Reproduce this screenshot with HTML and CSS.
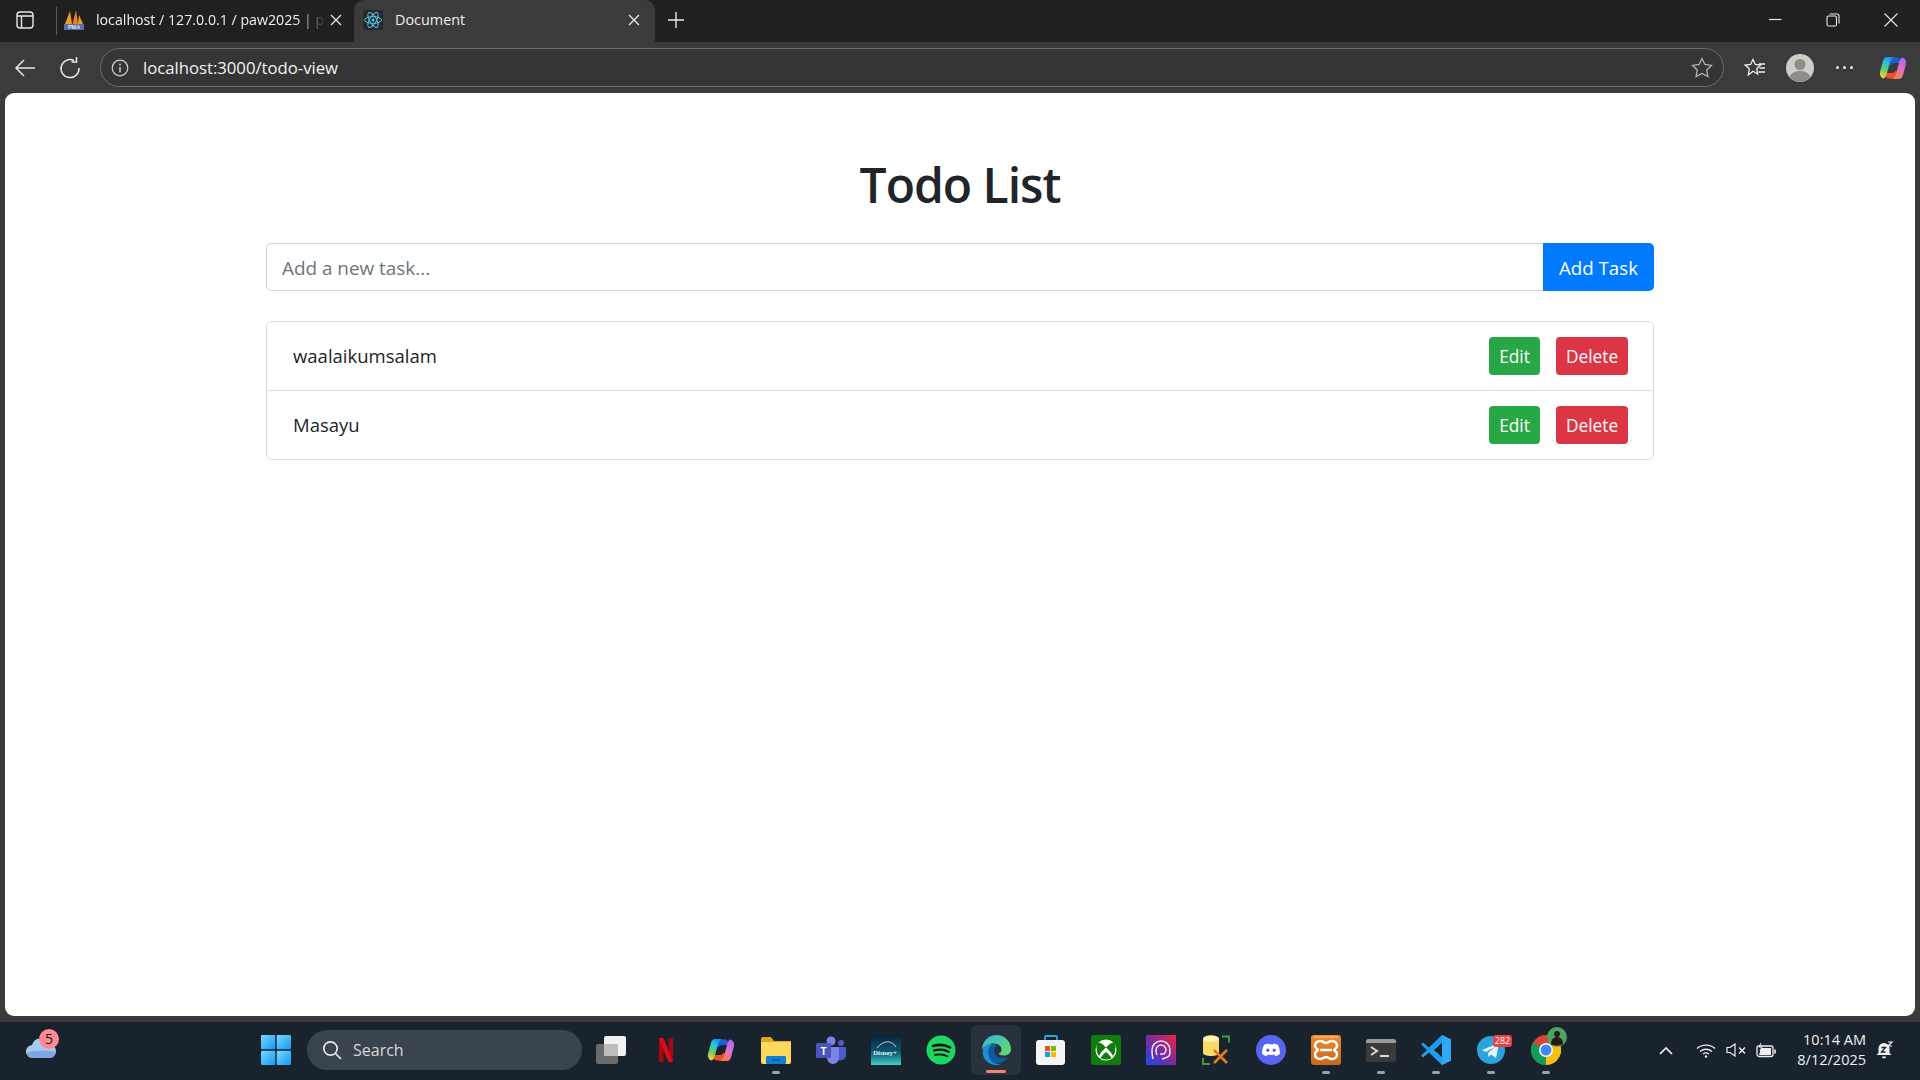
FILE: index.html
```html
<!DOCTYPE html>
<html lang="en">
<head>
    <meta charset="UTF-8">
    <title>Document</title>
    <link rel="stylesheet" href="styles.css">
</head>
<body>
    <svg class="defs" width="0" height="0">
        <defs>
            <linearGradient id="cp-a" x1="0.6" y1="0" x2="0.3" y2="1">
                <stop offset="0" stop-color="#1c8ff0"/>
                <stop offset="0.3" stop-color="#27c3e0"/>
                <stop offset="0.65" stop-color="#6fcf5a"/>
                <stop offset="1" stop-color="#f5d33c"/>
            </linearGradient>
            <linearGradient id="cp-b" x1="0.7" y1="0" x2="0.3" y2="1">
                <stop offset="0" stop-color="#a66cf0"/>
                <stop offset="0.5" stop-color="#e66fc8"/>
                <stop offset="1" stop-color="#f6823c"/>
            </linearGradient>
            <linearGradient id="edge-a" x1="0" y1="0" x2="1" y2="1">
                <stop offset="0" stop-color="#2fb5d8"/>
                <stop offset="1" stop-color="#6fdc62"/>
            </linearGradient>
            <linearGradient id="win-a" x1="0" y1="0" x2="1" y2="1">
                <stop offset="0" stop-color="#7bd7ff"/>
                <stop offset="1" stop-color="#0f9bf5"/>
            </linearGradient>
            <linearGradient id="proton-a" x1="0" y1="1" x2="1" y2="0">
                <stop offset="0" stop-color="#1c46f0"/>
                <stop offset="0.5" stop-color="#7a2d9c"/>
                <stop offset="1" stop-color="#f5233a"/>
            </linearGradient>
            <linearGradient id="disney-a" x1="0" y1="0" x2="0" y2="1">
                <stop offset="0" stop-color="#0a2238"/>
                <stop offset="0.6" stop-color="#0d5c78"/>
                <stop offset="1" stop-color="#3fd0c8"/>
            </linearGradient>
            <linearGradient id="xampp-a" x1="0" y1="0" x2="0" y2="1">
                <stop offset="0" stop-color="#f08a30"/>
                <stop offset="1" stop-color="#c7681c"/>
            </linearGradient>
            <symbol id="copilot" viewBox="0 0 28 24">
                <path d="M8 1.500h10c2 0 3 1 3.500 2.500l1 3H15c-2 0-3 1-4 3z" fill="#1d5fd6"/>
                <path d="M20 22.500H10c-2 0-3-1-3.500-2.500l-1-3H13c2 0 3-1 4-3z" fill="#ef4f2b"/>
                <path d="M8 1h8c-2.500 .5-4 2-5 5L8 17c-.6 2.500-1.500 4.500-3 5.500-3-.6-4.600-3.500-4-6.500L4 5C4.600 2.500 6 1 8 1z" fill="url(#cp-a)"/>
                <path d="M20 23h-8c2.500-.5 4-2 5-5l3-11c.6-2.500 1.500-4.500 3-5.500 3 .6 4.600 3.500 4 6.500l-3 11c-.6 2.500-2 4-4 4z" fill="url(#cp-b)"/>
            </symbol>
        </defs>
    </svg>

    <div class="tabstrip">
        <div class="sidebar-btn">
            <svg width="18" height="18" viewBox="0 0 18 18" fill="none" stroke="#e8e8e8" stroke-width="1.400">
                <rect x="1" y="1" width="16" height="16" rx="3"/>
                <path d="M1 5h16M5.500 5v12"/>
            </svg>
        </div>
        <div class="tab">
            <svg class="favicon" width="20" height="20" viewBox="0 0 20 20">
                <path d="M1 14L6 1l2 13z" fill="#f29a1d"/>
                <path d="M8.500 14L12 0l2 14z" fill="#f0801a"/>
                <path d="M14 14l1-9 4 9z" fill="#f29a1d"/>
                <rect x="0" y="14" width="20" height="6" fill="#5d6f9c"/>
                <text x="10" y="19" text-anchor="middle" class="pma-text">PMA</text>
            </svg>
            <span class="tab-title tab-title-fade">localhost / 127.0.0.1 / paw2025 | p</span>
            <svg class="tab-close" width="12" height="12" viewBox="0 0 12 12" stroke="#e8e8e8" stroke-width="1.300"><path d="M1 1l10 10M11 1L1 11"/></svg>
        </div>
        <div class="tab tab-active">
            <svg class="favicon" width="20" height="20" viewBox="0 0 20 20" fill="none" stroke="#58c4dc" stroke-width="1">
                <rect width="20" height="20" rx="2" fill="#23272f" stroke="none"/>
                <ellipse cx="10" cy="10" rx="8.500" ry="3.400"/>
                <ellipse cx="10" cy="10" rx="8.500" ry="3.400" transform="rotate(60 10 10)"/>
                <ellipse cx="10" cy="10" rx="8.500" ry="3.400" transform="rotate(120 10 10)"/>
                <circle cx="10" cy="10" r="1.500" fill="#58c4dc" stroke="none"/>
            </svg>
            <span class="tab-title">Document</span>
            <svg class="tab-close" width="12" height="12" viewBox="0 0 12 12" stroke="#e8e8e8" stroke-width="1.300"><path d="M1 1l10 10M11 1L1 11"/></svg>
        </div>
        <div class="new-tab">
            <svg width="18" height="18" viewBox="0 0 18 18" stroke="#e8e8e8" stroke-width="1.400"><path d="M9 1v16M1 9h16"/></svg>
        </div>
        <div class="window-controls">
            <div class="win-btn">
                <svg width="14" height="14" viewBox="0 0 14 14" stroke="#e8e8e8" stroke-width="1.200"><path d="M1 6.500h12.500"/></svg>
            </div>
            <div class="win-btn">
                <svg width="14" height="14" viewBox="0 0 14 14" fill="none" stroke="#e8e8e8" stroke-width="1.100"><rect x="1" y="3" width="9.500" height="10" rx="1.500"/><path d="M3.500 1h7.500c1.200 0 2 .8 2 2v7.500"/></svg>
            </div>
            <div class="win-btn">
                <svg width="14" height="14" viewBox="0 0 14 14" stroke="#e8e8e8" stroke-width="1.100"><path d="M.5.500l13 13M13.500.500l-13 13"/></svg>
            </div>
        </div>
    </div>

    <div class="toolbar">
        <div class="nav-btn">
            <svg width="22" height="20" viewBox="0 0 22 20" fill="none" stroke="#e8e8e8" stroke-width="1.500"><path d="M21 10H2M10 2l-8 8 8 8"/></svg>
        </div>
        <div class="nav-btn">
            <svg width="22" height="22" viewBox="0 0 22 22" fill="none" stroke="#e8e8e8" stroke-width="1.500"><path d="M15 3.500A9 9 0 1 0 20 11"/><path d="M15.500 0v5h-5" transform="translate(2 0)"/></svg>
        </div>
        <div class="address-bar">
            <svg class="info-icon" width="18" height="18" viewBox="0 0 18 18" fill="none" stroke="#cfcfcf" stroke-width="1.200"><circle cx="9" cy="9" r="7.800"/><path d="M9 8v5.500" stroke-width="1.400"/><circle cx="9" cy="5.500" r=".9" fill="#cfcfcf" stroke="none"/></svg>
            <span class="url">localhost:3000/todo-view</span>
            <svg class="addr-star" width="22" height="21" viewBox="0 0 22 21" fill="none" stroke="#b5b5b5" stroke-width="1.300"><path d="M11 1.500l2.900 6 6.600.9-4.800 4.600 1.200 6.500L11 16.400l-5.900 3.100 1.200-6.500L1.500 8.400l6.600-.9z"/></svg>
        </div>
        <div class="tool-btn tool-fav">
            <svg width="22" height="20" viewBox="0 0 22 20" fill="none" stroke="#eee" stroke-width="1.300"><path d="M9 1.500l2.300 5 5.200.6-3.800 3.600 1 5.300L9 13.300 4.300 17l1-6.300L1.200 7.100l5.400-.6z"/><path d="M15 6h6M15.500 10h5.500M14.500 14h6.500"/></svg>
        </div>
        <div class="tool-btn tool-profile">
            <svg width="28" height="28" viewBox="0 0 28 28">
                <circle cx="14" cy="14" r="14" fill="#cfcdc8"/>
                <circle cx="14" cy="10.500" r="5.500" fill="#8f8c87"/>
                <path d="M3.500 23c2-4.500 6-6 10.500-6s8.500 1.500 10.500 6A14 14 0 0 1 3.500 23z" fill="#8f8c87"/>
            </svg>
        </div>
        <div class="tool-btn tool-more">
            <span class="dot"></span><span class="dot"></span><span class="dot"></span>
        </div>
        <div class="tool-btn tool-copilot">
            <svg width="28" height="24"><use href="#copilot"/></svg>
        </div>
    </div>

    <main class="page">
        <div class="container">
            <h1>Todo List</h1>
            <form class="add-form">
                <input type="text" class="task-input" placeholder="Add a new task...">
                <button type="button" class="add-btn">Add Task</button>
            </form>
            <ul class="task-list">
                <li class="task-item">
                    <span class="task-name">waalaikumsalam</span>
                    <div class="task-actions">
                        <button type="button" class="btn-sm btn-edit">Edit</button>
                        <button type="button" class="btn-sm btn-delete">Delete</button>
                    </div>
                </li>
                <li class="task-item">
                    <span class="task-name">Masayu</span>
                    <div class="task-actions">
                        <button type="button" class="btn-sm btn-edit">Edit</button>
                        <button type="button" class="btn-sm btn-delete">Delete</button>
                    </div>
                </li>
            </ul>
        </div>
    </main>

    <div class="taskbar">
        <div class="weather">
            <svg width="30" height="20" viewBox="0 0 30 20">
                <path d="M7 20a6.500 6.500 0 0 1-1-13 9 9 0 0 1 17-1 7 7 0 0 1 0 14z" fill="#a9c8f2"/>
                <path d="M1 15c6-3 20-3 29-1-1 4-3 6-7 6H7c-3 0-5-2-6-5z" fill="#7fa6e0"/>
            </svg>
            <span class="weather-badge">5</span>
        </div>
        <div class="task-icon start-icon">
            <svg width="30" height="30" viewBox="0 0 30 30" fill="url(#win-a)">
                <rect x="0" y="0" width="14.300" height="14.300" rx="1"/>
                <rect x="15.700" y="0" width="14.300" height="14.300" rx="1"/>
                <rect x="0" y="15.700" width="14.300" height="14.300" rx="1"/>
                <rect x="15.700" y="15.700" width="14.300" height="14.300" rx="1"/>
            </svg>
        </div>
        <div class="search-box">
            <svg width="20" height="20" viewBox="0 0 20 20" fill="none" stroke="#e6e6e6" stroke-width="1.700"><circle cx="8.500" cy="8.500" r="6.700"/><path d="M13.500 13.500l5.500 5.500"/></svg>
            <span>Search</span>
        </div>

        <div class="task-icon">
            <svg width="30" height="28" viewBox="0 0 30 28">
                <rect x="0" y="8" width="22" height="20" rx="2" fill="#6a6a6a"/>
                <rect x="8" y="0" width="22" height="20" rx="2" fill="#f2f2f2"/>
                <rect x="8" y="8" width="14" height="12" fill="#bdbdbd"/>
            </svg>
        </div>
        <div class="task-icon">
            <svg width="14" height="24" viewBox="0 0 14 24">
                <path d="M0 0h4.500v24H0zM9.500 0H14v24H9.500z" fill="#a80710"/>
                <path d="M0 0h4.500L14 24H9.500z" fill="#e50914"/>
            </svg>
        </div>
        <div class="task-icon">
            <svg width="28" height="24"><use href="#copilot"/></svg>
        </div>
        <div class="task-icon running">
            <svg width="30" height="27" viewBox="0 0 30 27">
                <path d="M0 2c0-1 .7-2 2-2h8l3 4h17v3H0z" fill="#e3a615"/>
                <path d="M0 5h30v20c0 1-.8 2-2 2H2c-1.200 0-2-1-2-2z" fill="#fbd95c"/>
                <rect x="5" y="19" width="20" height="8" rx="1" fill="#0f7fd6"/>
                <rect x="11" y="22" width="8" height="1.500" fill="#0b4f8f"/>
            </svg>
        </div>
        <div class="task-icon">
            <svg width="30" height="28" viewBox="0 0 30 28">
                <circle cx="15" cy="5" r="4.500" fill="#7b83eb"/>
                <circle cx="25" cy="7" r="3" fill="#5059c9"/>
                <path d="M20 11h9c.6 0 1 .4 1 1v7a6 6 0 0 1-10 4z" fill="#5059c9"/>
                <path d="M9 11h14v11a6 6 0 0 1-12 0z" fill="#7b83eb"/>
                <rect x="0" y="7" width="15" height="15" rx="1.500" fill="#4b53bc"/>
                <text x="7.500" y="19" text-anchor="middle" class="teams-text">T</text>
            </svg>
        </div>
        <div class="task-icon">
            <svg width="30" height="30" viewBox="0 0 30 30">
                <rect width="30" height="30" fill="url(#disney-a)"/>
                <path d="M6 13c6-8 15-8 19-1" fill="none" stroke="#e8f4f6" stroke-width=".8"/>
                <text x="14" y="20" text-anchor="middle" class="disney-text">Disney+</text>
            </svg>
        </div>
        <div class="task-icon">
            <svg width="30" height="30" viewBox="0 0 30 30" fill="none" stroke="#111" stroke-linecap="round">
                <circle cx="15" cy="15" r="14.500" fill="#1ed760" stroke="none"/>
                <path d="M7 11c6-1.800 12-1.300 17 1.300" stroke-width="2.600"/>
                <path d="M8 15.500c5-1.400 10.500-1 14.800 1.400" stroke-width="2.200"/>
                <path d="M9 20c4.200-1 8.500-.7 12.300 1.300" stroke-width="1.800"/>
            </svg>
        </div>
        <div class="task-icon active">
            <svg width="30" height="30" viewBox="0 0 30 30">
                <path d="M2 14c2-3.500 6-5.500 10.500-5-3 1-5 4-5 8 0 6 5 12 12 12.500-1.500.5-3 .5-4.500.5C7 30 0 23 2 14z" fill="#1b8fd8"/>
                <path d="M7.500 17c0-4 2-7 5-8 2 0 3 .5 4 1.500-2 1-3.500 2.500-3.500 5 0 5 5 8 10 7.500 2 0 3-.5 4-1-2.500 4-7 7-12 6.500-5-.5-7.500-6-7.500-11.500z" fill="#0c59a4"/>
                <path d="M1 15C1 6 8 0 15.500 0 23 0 30 6 30 14c0 4-3 6.500-7 6.500-3 0-5-1-5.500-2 2-.5 3-2 3-4 0-3-3-6-7.500-6C8 8.500 3 11 1 15z" fill="url(#edge-a)"/>
            </svg>
        </div>
        <div class="task-icon">
            <svg width="30" height="30" viewBox="0 0 30 30">
                <path d="M9 6V2c0-1 1-1 1-1h10s1 0 1 1v4" fill="none" stroke="#22a9e0" stroke-width="1.800"/>
                <rect x="0" y="5" width="29" height="25" rx="3" fill="#f5f5f5"/>
                <rect x="9" y="11" width="5" height="5" fill="#f25022"/>
                <rect x="15" y="11" width="5" height="5" fill="#7fba00"/>
                <rect x="9" y="17" width="5" height="5" fill="#00a4ef"/>
                <rect x="15" y="17" width="5" height="5" fill="#ffb900"/>
            </svg>
        </div>
        <div class="task-icon">
            <svg width="30" height="30" viewBox="0 0 30 30">
                <rect width="30" height="30" rx="3" fill="#107c10"/>
                <circle cx="15" cy="15" r="10.500" fill="#fff"/>
                <path d="M15 12.500C12 9.500 9.500 7 7.500 7.500 5 10 5 13 6 14c-1 3 1 5 2 7 1.500-3 4-6 7-8.500zM15 12.500c3-3 5.500-5.500 7.500-5 2.500 2.500 2.500 5.500 1.500 6.500 1 3-1 5-2 7-1.500-3-4-6-7-8.500zM15 17c-3 2.500-5 5-5.500 6 3.500 2 7.500 2 11 0-.5-1-2.500-3.500-5.500-6z" fill="#107c10"/>
            </svg>
        </div>
        <div class="task-icon">
            <svg width="30" height="30" viewBox="0 0 30 30" fill="none" stroke="#f0e4f5" stroke-width="1.500">
                <rect width="30" height="30" fill="url(#proton-a)" stroke="none"/>
                <path d="M7 24c-1-3-1-6-1-9a9 9 0 0 1 18 0c0 3 0 5-1 6-2 2-5 2-7 3"/>
                <path d="M11 20c-1-2-1-4-1-5a5 5 0 0 1 10 0c0 2-1 3-2 4h-4"/>
            </svg>
        </div>
        <div class="task-icon">
            <svg width="30" height="30" viewBox="0 0 30 30" fill="none">
                <path d="M21 1.500h7v6M2 23v6h7" stroke="#3f9a48" stroke-width="2"/>
                <path d="M2 4c0-5 16-5 16 0v14c0 4-16 4-16 0z" fill="#f7dd68"/>
                <ellipse cx="10" cy="4" rx="8" ry="3" fill="#fff3b0"/>
                <path d="M13 28l13-13M26 28L13 15" stroke="#e87a1c" stroke-width="2.600"/>
            </svg>
        </div>
        <div class="task-icon">
            <svg width="30" height="30" viewBox="0 0 30 30">
                <circle cx="15" cy="15" r="15" fill="#5865f2"/>
                <path d="M8 10c2-1 4-1.500 4.500-1.500l.5 1c1.300-.2 2.700-.2 4 0l.5-1c.5 0 2.500.5 4.500 1.500 1.500 3 2 6 1.800 9-1.500 1.200-3 1.800-4.500 2.200l-1-1.500 1.500-.8c-3 1.400-6.600 1.400-9.600 0l1.500.8-1 1.500C9.200 20.800 7.700 20.200 6.200 19 6 16 6.500 13 8 10z" fill="#fff"/>
                <ellipse cx="11.800" cy="15.200" rx="1.600" ry="1.800" fill="#5865f2"/>
                <ellipse cx="18.200" cy="15.200" rx="1.600" ry="1.800" fill="#5865f2"/>
            </svg>
        </div>
        <div class="task-icon running">
            <svg width="30" height="30" viewBox="0 0 30 30" fill="none">
                <rect width="30" height="30" rx="3" fill="url(#xampp-a)"/>
                <path d="M3 2h24" stroke="#f6b27a" stroke-width="1.500"/>
                <path d="M9 6c3 0 4 2 6 2s3-2 6-2c3 0 5 2 5 5s-3 3-3 4 3 1 3 4-2 5-5 5c-3 0-4-2-6-2s-3 2-6 2c-3 0-5-2-5-5s3-3 3-4-3-1-3-4 2-5 5-5z" stroke="#fff" stroke-width="2.500"/>
                <path d="M9 15h12" stroke="#fff" stroke-width="2.500"/>
            </svg>
        </div>
        <div class="task-icon running">
            <svg width="30" height="23" viewBox="0 0 30 23" fill="none">
                <rect width="30" height="23" rx="2" fill="#3a3a3a"/>
                <path d="M0 2c0-1 1-2 2-2h26c1 0 2 1 2 2v2H0z" fill="#9a9a9a"/>
                <path d="M5 8l6 4-6 4" stroke="#d8d8d8" stroke-width="2"/>
                <path d="M14 17h9" stroke="#eee" stroke-width="1.800"/>
            </svg>
        </div>
        <div class="task-icon running">
            <svg width="30" height="30" viewBox="0 0 30 30">
                <path d="M21 0l9 4.500v21L21 30 8 17.500l-6 5-2-2 6-5.500-6-5.500 2-2 6 5z" fill="#1f9cf0"/>
                <path d="M21 8l-8 7 8 7z" fill="#18232e"/>
                <path d="M21 0l9 4.500v21L21 30z" fill="#2fa9f5"/>
                <path d="M21 8v14l-4-4v-6z" fill="#18232e"/>
            </svg>
        </div>
        <div class="task-icon running">
            <div class="icon-wrap">
                <svg width="28" height="28" viewBox="0 0 28 28">
                    <circle cx="14" cy="14" r="14" fill="#2ba3dd"/>
                    <path d="M5 14l17-7-3 15-5-3.500-2.500 2.500-.5-4 7-6-9 5z" fill="#e8f5fc"/>
                </svg>
                <span class="tg-badge">282</span>
            </div>
        </div>
        <div class="task-icon running">
            <div class="icon-wrap">
                <svg width="30" height="30" viewBox="0 0 30 30">
                    <circle cx="15" cy="15" r="15" fill="#db4437"/>
                    <path d="M15 15L28 7.500A15 15 0 0 1 15 30z" fill="#f4c20d"/>
                    <path d="M15 15L15 30A15 15 0 0 1 2 7.500z" fill="#0f9d58"/>
                    <circle cx="15" cy="15" r="7" fill="#fff"/>
                    <circle cx="15" cy="15" r="5.500" fill="#4285f4"/>
                </svg>
                <svg class="chrome-avatar" width="20" height="20" viewBox="0 0 20 20">
                    <circle cx="10" cy="10" r="10" fill="#4fa35d"/>
                    <circle cx="10" cy="7" r="3" fill="#241a1a"/>
                    <path d="M4 17c0-5 3-7 6-7s6 2 6 7c-3 2-9 2-12 0z" fill="#241a1a"/>
                </svg>
            </div>
        </div>

        <div class="tray">
            <div class="tray-icon tray-chevron">
                <svg width="14" height="9" viewBox="0 0 14 9" fill="none" stroke="#f0f0f0" stroke-width="1.700"><path d="M1 8l6-6 6 6"/></svg>
            </div>
            <div class="tray-icon">
                <svg width="20" height="15" viewBox="0 0 20 15" fill="none" stroke="#f0f0f0" stroke-width="1.300"><path d="M1 5.500c5-4.500 13-4.500 18 0M4 8.500c3.500-3 8.500-3 12 0M7 11c1.800-1.300 4.200-1.300 6 0"/><circle cx="10" cy="13.500" r="1.200" fill="#f0f0f0" stroke="none"/></svg>
            </div>
            <div class="tray-icon">
                <svg width="20" height="14" viewBox="0 0 20 14" fill="none" stroke="#f0f0f0" stroke-width="1.200"><path d="M1 4.500h3L9 1v12L4 9.500H1z"/><path d="M13 4.500l6 6M19 4.500l-6 6" stroke-width="1.400"/></svg>
            </div>
            <div class="tray-icon">
                <svg width="20" height="15" viewBox="0 0 20 15" fill="none" stroke="#f0f0f0" stroke-width="1.300"><rect x="1" y="3" width="16" height="10.500" rx="2"/><path d="M19 6.500v4" stroke-width="1.600"/><path d="M5 5h10v7H3z" fill="#f0f0f0" stroke="none"/><path d="M5 0L3 4h3L4 8" stroke="#f0f0f0" stroke-width="1"/></svg>
            </div>
            <div class="clock">
                <span>10:14 AM</span>
                <span>8/12/2025</span>
            </div>
            <div class="tray-icon tray-bell">
                <svg width="18" height="18" viewBox="0 0 18 18">
                    <path d="M8 2a5.500 5.500 0 0 1 5.500 5.500V12l2 2H.5l2-2V7.500A5.500 5.500 0 0 1 8 2z" fill="#f0f0f0"/>
                    <path d="M6 15.500h4a2 2 0 0 1-4 0z" fill="#f0f0f0"/>
                    <path d="M5.500 6.500h4L5.500 11h4" fill="none" stroke="#18232e" stroke-width="1.300"/>
                    <path d="M12 1h4l-4 4h4" fill="none" stroke="#f0f0f0" stroke-width="1.200"/>
                </svg>
            </div>
        </div>
    </div>
</body>
</html>
```

FILE: styles.css
```css
* {
    box-sizing: border-box;
}

html,
body {
    margin: 0;
    height: 1080px;
    overflow: hidden;
}

body {
    display: flex;
    flex-direction: column;
    background-color: #3b3b3b;
    font-family: "Open Sans", "Noto Sans", sans-serif;
    color: #212529;
}

.defs {
    position: absolute;
}

/* browser tabs */
.tabstrip {
    display: flex;
    align-items: stretch;
    height: 42px;
    background-color: #202020;
    color: #eeeeee;
}

.sidebar-btn {
    display: flex;
    align-items: center;
    justify-content: center;
    width: 56px;
    padding: 0 7px 3px 0;
}

.tab {
    display: flex;
    align-items: center;
    align-self: flex-start;
    width: 298px;
    height: 28px;
    margin: 7px 0;
    padding: 0 12px 3px 7px;
    border-left: 1px solid #5a5a5a;
    font-size: 14.200px;
}

.tab-active {
    width: 301px;
    height: 42px;
    margin: 0;
    padding: 0 15px 3px 9px;
    border-left: 0;
    border-radius: 10px 10px 0 0;
    background-color: #3b3b3b;
    font-size: 14.400px;
}

.favicon {
    flex: none;
}

.pma-text {
    font: bold 5.500px "Liberation Sans", sans-serif;
    fill: #dfe6f5;
}

.tab-title {
    flex: 1;
    min-width: 0;
    margin-left: 12px;
    white-space: nowrap;
}

.tab-title-fade {
    -webkit-mask-image: linear-gradient(to right, #000 87%, transparent 100%);
    mask-image: linear-gradient(to right, #000 87%, transparent 100%);
}

.tab-close {
    flex: none;
    margin-left: 4px;
}

.new-tab {
    display: flex;
    align-items: center;
    justify-content: center;
    width: 42px;
    padding-bottom: 2px;
}

.window-controls {
    display: flex;
    margin-left: auto;
}

.win-btn {
    display: flex;
    align-items: center;
    justify-content: center;
    width: 58px;
    padding-bottom: 2px;
}

/* toolbar */
.toolbar {
    display: flex;
    align-items: center;
    height: 51px;
    background-color: #3b3b3b;
}

.nav-btn {
    display: flex;
    align-items: center;
    justify-content: center;
    width: 40px;
}

.nav-btn:first-child {
    width: 50px;
}

.address-bar {
    display: flex;
    align-items: center;
    width: 1624px;
    height: 39px;
    margin-left: 10px;
    padding: 0 10px 0 10px;
    border: 1px solid #6b6b6b;
    border-radius: 20px;
    background-color: #353535;
}

.url {
    flex: 1;
    margin-left: 14px;
    font-size: 16.700px;
    color: #f2f2f2;
}

.tool-btn {
    display: flex;
    align-items: center;
    justify-content: center;
    width: 45px;
}

.tool-fav {
    margin-left: 8px;
}

.tool-more {
    gap: 4px;
}

.tool-copilot {
    margin-left: 3px;
}

.dot {
    width: 3px;
    height: 3px;
    border-radius: 50%;
    background-color: #eeeeee;
}

/* page content */
.page {
    flex: 1;
    margin: 0 5px;
    border-radius: 9px;
    background-color: #ffffff;
}

.container {
    width: 1388px;
    margin: 60px auto 0;
}

h1 {
    margin: 0 0 26px;
    font-size: 48px;
    font-weight: 600;
    letter-spacing: -1px;
    line-height: 64px;
    text-align: center;
}

.add-form {
    display: flex;
    height: 48px;
    margin-bottom: 30px;
}

.task-input {
    flex: 1;
    padding: 1px 15px 0;
    border: 1px solid #ced4da;
    border-right: 0;
    border-radius: 5px 0 0 5px;
    font: inherit;
    font-size: 18.900px;
    color: #495057;
    outline: none;
}

.task-input::placeholder {
    color: #6c757d;
}

.add-btn {
    width: 111px;
    padding-bottom: 1px;
    border: none;
    border-radius: 0 5px 5px 0;
    background-color: #007bff;
    color: #ffffff;
    font: inherit;
    font-size: 18.700px;
}

.task-list {
    margin: 0;
    padding: 0;
    border: 1px solid #dfdfdf;
    border-radius: 5px;
    list-style: none;
}

.task-item {
    display: flex;
    align-items: center;
    justify-content: space-between;
    height: 68px;
    padding: 0 25px 0 26px;
    font-size: 18.500px;
}

.task-item + .task-item {
    border-top: 1px solid #dfdfdf;
    height: 69px;
}

.task-name {
    margin-bottom: 1px;
}

.task-actions {
    display: flex;
    gap: 16px;
}

.btn-sm {
    height: 38px;
    padding: 0;
    border: none;
    border-radius: 4px;
    color: #ffffff;
    font: inherit;
    font-size: 17.300px;
}

.btn-edit {
    width: 51px;
    background-color: #28a745;
}

.btn-delete {
    width: 72px;
    background-color: #dc3545;
}

/* windows taskbar */
.taskbar {
    display: flex;
    align-items: center;
    height: 58px;
    margin-top: 6px;
    background-color: #18232e;
    color: #f0f0f0;
}

.weather {
    position: relative;
    flex: none;
    display: flex;
    align-items: center;
    width: 248px;
    margin-bottom: 6px;
    padding-left: 26px;
}

.weather-badge {
    position: absolute;
    left: 39px;
    top: -9px;
    width: 20px;
    height: 20px;
    border-radius: 50%;
    background-color: #ff8a93;
    color: #1b1b1b;
    font-size: 14px;
    line-height: 20px;
    text-align: center;
}

.task-icon {
    position: relative;
    flex: none;
    display: flex;
    align-items: center;
    justify-content: center;
    width: 55px;
    height: 50px;
    margin-bottom: 2px;
}

.start-icon {
    margin-right: 4px;
}

.task-icon.active {
    width: 50px;
    margin: 0 2.500px 2px;
    border-radius: 6px;
    background-color: #27323d;
}

.task-icon.active::after,
.task-icon.running::after {
    content: "";
    position: absolute;
    left: 50%;
    bottom: 1px;
    width: 8px;
    height: 3px;
    margin-left: -4px;
    border-radius: 2px;
    background-color: #9aa3ab;
}

.task-icon.active::after {
    width: 20px;
    margin-left: -10px;
    bottom: 2px;
    background-color: #f4846c;
}

.search-box {
    flex: none;
    display: flex;
    align-items: center;
    gap: 11px;
    width: 275px;
    height: 40px;
    margin: 0 1.500px 2px 0;
    padding-left: 15px;
    border-radius: 20px;
    background-color: #3a444e;
    color: #d5d8db;
    font-size: 16px;
}

.teams-text {
    font: bold 10px "Liberation Sans", sans-serif;
    fill: #ffffff;
}

.disney-text {
    font: bold 7px "Liberation Serif", serif;
    fill: #e8f4f6;
}

.icon-wrap {
    position: relative;
    display: flex;
}

.tg-badge {
    position: absolute;
    left: 16px;
    top: -1px;
    width: 19px;
    height: 12px;
    border-radius: 3px;
    background-color: #e9404a;
    color: #ffffff;
    font-size: 9px;
    line-height: 12px;
    text-align: center;
}

.chrome-avatar {
    position: absolute;
    left: 16px;
    top: -8px;
}

.tray {
    flex: none;
    display: flex;
    align-items: center;
    margin: 0 0 2px auto;
    padding-right: 25px;
}

.tray-icon {
    display: flex;
    align-items: center;
    justify-content: center;
    width: 30px;
}

.tray-chevron {
    margin-right: 10px;
}

.clock {
    display: flex;
    flex-direction: column;
    align-items: flex-end;
    width: 85px;
    font-size: 14.500px;
    line-height: 20px;
}

.tray-bell {
    width: 20px;
    margin-left: 9px;
}
```
